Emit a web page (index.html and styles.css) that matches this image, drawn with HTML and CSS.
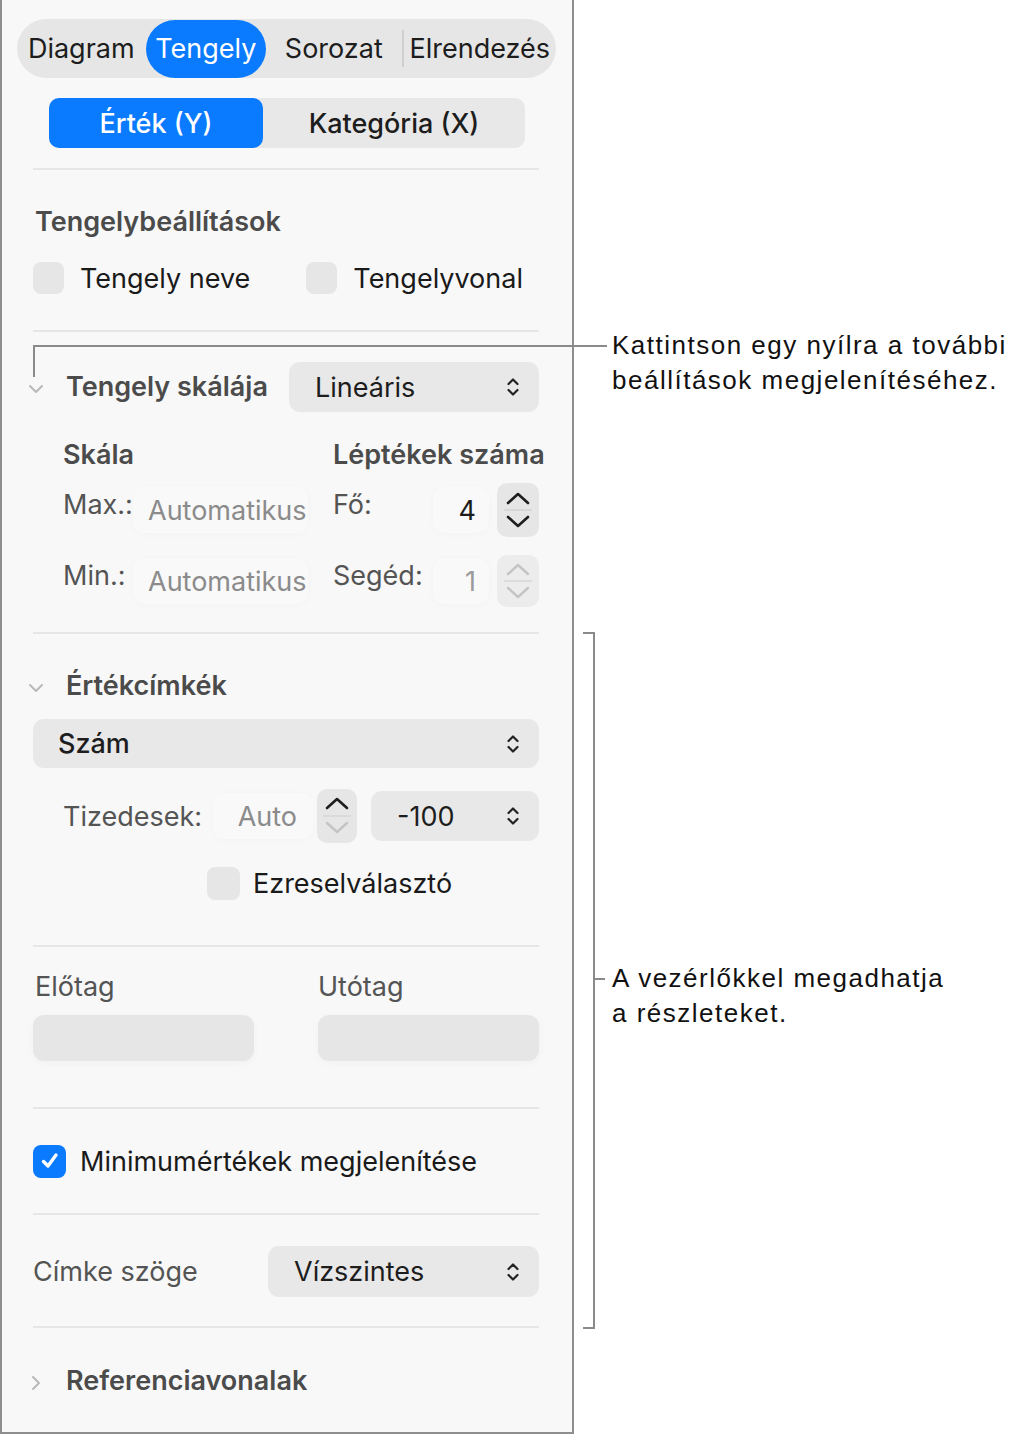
FILE: index.html
```html
<!DOCTYPE html>
<html lang="hu">
<head>
    <meta charset="UTF-8">
    <meta name="viewport" content="width=device-width, initial-scale=1.0">
    <title>Tengely beállítások</title>
    <link rel="stylesheet" href="styles.css">
</head>
<body>
    <div class="stage">
        <div class="panel">
            <!-- Top tabs -->
            <div class="tabs">
                <span class="tab t1">Diagram</span>
                <span class="tab t2 active">Tengely</span>
                <span class="tab t3">Sorozat</span>
                <span class="tab-sep"></span>
                <span class="tab t4">Elrendezés</span>
            </div>

            <div class="segmented">
                <span class="seg active">Érték (Y)</span>
                <span class="seg">Kategória (X)</span>
            </div>

            <div class="divider d1"></div>

            <div class="title t-axis">Tengelybeállítások</div>
            <div class="check-row">
                <label class="check"><span class="box"></span>Tengely neve</label>
                <label class="check second"><span class="box"></span>Tengelyvonal</label>
            </div>

            <div class="divider d2"></div>

            <div class="scale-row">
                <span class="disclose">
                    <svg width="18" height="10" viewBox="0 0 18 10"><path d="M3 2 L9 8 L15 2" fill="none" stroke="#b9b9b9" stroke-width="2" stroke-linecap="round" stroke-linejoin="round"/></svg>
                </span>
                <span class="title inline">Tengely skálája</span>
                <div class="popup scale-popup">
                    <span>Lineáris</span>
                    <svg class="updown" width="14" height="24" viewBox="0 0 14 24"><path d="M2.5 9 L7 4.5 L11.5 9 M2.5 15 L7 19.5 L11.5 15" fill="none" stroke="#222" stroke-width="2.2" stroke-linecap="round" stroke-linejoin="round"/></svg>
                </div>
            </div>

            <div class="sub-heads">
                <span class="sub">Skála</span>
                <span class="sub right">Léptékek száma</span>
            </div>

            <div class="num-row r-max">
                <span class="lbl">Max.:</span>
                <span class="field auto">Automatikus</span>
                <span class="lbl second">Fő:</span>
                <span class="field num">4</span>
                <div class="stepper">
                    <svg width="42" height="54" viewBox="0 0 42 54"><path d="M11 20 L21 11 L31 20" fill="none" stroke="#1e1e1e" stroke-width="2.6" stroke-linecap="round" stroke-linejoin="round"/><line x1="7" y1="27" x2="35" y2="27" stroke="#d2d2d2" stroke-width="1.5"/><path d="M11 34 L21 43 L31 34" fill="none" stroke="#1e1e1e" stroke-width="2.6" stroke-linecap="round" stroke-linejoin="round"/></svg>
                </div>
            </div>

            <div class="num-row r-min">
                <span class="lbl">Min.:</span>
                <span class="field auto">Automatikus</span>
                <span class="lbl second">Segéd:</span>
                <span class="field num dim">1</span>
                <div class="stepper">
                    <svg width="42" height="52" viewBox="0 0 42 52"><path d="M11 19 L21 10 L31 19" fill="none" stroke="#c4c4c4" stroke-width="2.4" stroke-linecap="round" stroke-linejoin="round"/><line x1="7" y1="26" x2="35" y2="26" stroke="#d6d6d6" stroke-width="1.5"/><path d="M11 33 L21 42 L31 33" fill="none" stroke="#c4c4c4" stroke-width="2.4" stroke-linecap="round" stroke-linejoin="round"/></svg>
                </div>
            </div>

            <div class="divider d3"></div>

            <div class="group-head">
                <span class="disclose">
                    <svg width="18" height="10" viewBox="0 0 18 10"><path d="M3 2 L9 8 L15 2" fill="none" stroke="#b9b9b9" stroke-width="2" stroke-linecap="round" stroke-linejoin="round"/></svg>
                </span>
                <span class="title inline">Értékcímkék</span>
            </div>

            <div class="popup wide">
                <span>Szám</span>
                <svg class="updown" width="14" height="24" viewBox="0 0 14 24"><path d="M2.5 9 L7 4.5 L11.5 9 M2.5 15 L7 19.5 L11.5 15" fill="none" stroke="#222" stroke-width="2.2" stroke-linecap="round" stroke-linejoin="round"/></svg>
            </div>

            <div class="dec-row">
                <span class="lbl">Tizedesek:</span>
                <span class="field dec">Auto</span>
                <div class="stepper small">
                    <svg width="40" height="54" viewBox="0 0 40 54"><path d="M10 19 L20 10 L30 19" fill="none" stroke="#1e1e1e" stroke-width="2.6" stroke-linecap="round" stroke-linejoin="round"/><line x1="6" y1="27" x2="34" y2="27" stroke="#d6d6d6" stroke-width="1.5"/><path d="M10 34 L20 43 L30 34" fill="none" stroke="#c4c4c4" stroke-width="2.4" stroke-linecap="round" stroke-linejoin="round"/></svg>
                </div>
                <div class="popup neg">
                    <span>-100</span>
                    <svg class="updown" width="14" height="24" viewBox="0 0 14 24"><path d="M2.5 9 L7 4.5 L11.5 9 M2.5 15 L7 19.5 L11.5 15" fill="none" stroke="#222" stroke-width="2.2" stroke-linecap="round" stroke-linejoin="round"/></svg>
                </div>
            </div>

            <div class="check-row thousands">
                <label class="check"><span class="box"></span>Ezreselválasztó</label>
            </div>

            <div class="divider d4"></div>

            <div class="affix-labels">
                <span class="lbl">Előtag</span>
                <span class="lbl">Utótag</span>
            </div>
            <div class="affix-fields">
                <span class="text-box"></span>
                <span class="text-box"></span>
            </div>

            <div class="divider d5"></div>

            <div class="check-row minimum">
                <label class="check"><span class="box on">
                    <svg width="24" height="24" viewBox="0 0 24 24"><path d="M5.5 12.5 L10 17 L18 6" fill="none" stroke="#fff" stroke-width="3.4" stroke-linecap="round" stroke-linejoin="round"/></svg>
                </span>Minimumértékek megjelenítése</label>
            </div>

            <div class="divider d6"></div>

            <div class="angle-row">
                <span class="lbl">Címke szöge</span>
                <div class="popup angle-popup">
                    <span>Vízszintes</span>
                    <svg class="updown" width="14" height="24" viewBox="0 0 14 24"><path d="M2.5 9 L7 4.5 L11.5 9 M2.5 15 L7 19.5 L11.5 15" fill="none" stroke="#222" stroke-width="2.2" stroke-linecap="round" stroke-linejoin="round"/></svg>
                </div>
            </div>

            <div class="divider d7"></div>

            <div class="group-head ref">
                <span class="disclose">
                    <svg width="12" height="18" viewBox="0 0 12 18"><path d="M3 3 L9 9 L3 15" fill="none" stroke="#b9b9b9" stroke-width="2" stroke-linecap="round" stroke-linejoin="round"/></svg>
                </span>
                <span class="title inline">Referenciavonalak</span>
            </div>
        </div>

        <!-- Callouts drawn over the panel -->
        <div class="leader-arrow"></div>
        <p class="note note-top">Kattintson egy nyílra a további<br>beállítások megjelenítéséhez.</p>

        <div class="bracket"></div>
        <div class="bracket-tick"></div>
        <p class="note note-mid">A vezérlőkkel megadhatja<br>a részleteket.</p>
    </div>
</body>
</html>
```

FILE: styles.css
```css
body {
    margin: 0;
    background-color: #ffffff;
    font-family: 'Inter', 'Noto Sans', sans-serif;
    color: #1d1d1d;
}
.stage {
    position: relative;
    width: 1019px;
    height: 1436px;
}
.panel {
    box-sizing: border-box;
    width: 574px;
    height: 1434px;
    border: 2px solid #8e8e8e;
    border-top: none;
    background-color: #f8f8f8;
    padding: 19px 33px 0 31px;
    display: flex;
    flex-direction: column;
    font-size: 27px;
}

/* tab bar */
.tabs {
    display: flex;
    align-items: center;
    height: 59px;
    margin: 0 -17px 0 -16px;
    border-radius: 30px;
    background-color: #e6e6e6;
    font-size: 27px;
}
.tab {
    display: flex;
    justify-content: center;
    align-items: center;
    height: 58px;
    white-space: nowrap;
}
.t1 { width: 129px; }
.t2 { width: 121px; }
.t3 { width: 136px; }
.t4 { width: 153px; }
.tab.active {
    background-color: #0a7aff;
    color: #ffffff;
    border-radius: 29px;
}
.tab-sep {
    width: 2px;
    height: 37px;
    background-color: #d0d0d0;
}
.segmented {
    display: flex;
    height: 50px;
    margin: 20px 14px 0 16px;
    border-radius: 10px;
    background-color: #e8e8e8;
    font-size: 27px;
    font-weight: 500;
}
.seg {
    flex: 1;
    display: flex;
    justify-content: center;
    align-items: center;
}
.seg.active {
    flex: 0 0 214px;
    background-color: #0a7aff;
    color: #ffffff;
    border-radius: 10px;
}
.divider {
    height: 2px;
    background-color: #e6e6e6;
    flex-shrink: 0;
}
.d1 { margin-top: 20px; }
.d2 { margin-top: 35px; }
.d3 { margin-top: 25px; }
.d4 { margin-top: 45px; }
.d5 { margin-top: 46px; }
.d6 { margin-top: 35px; }
.d7 { margin-top: 29px; }

.title {
    font-weight: 600;
    color: #4b4b4b;
    line-height: 34px;
    white-space: nowrap;
}
.t-axis {
    margin: 35px 0 0 2px;
}
.title.inline {
    margin-left: 21px;
}

/* checkboxes */
.check-row {
    display: flex;
    height: 34px;
    margin-top: 22px;
}
.check {
    display: flex;
    align-items: center;
    color: #1a1a1a;
    white-space: nowrap;
}
.check.second {
    margin-left: 56px;
}
.box {
    width: 31px;
    height: 32px;
    border-radius: 8px;
    background-color: #e6e6e6;
    margin-right: 16px;
    display: flex;
    justify-content: center;
    align-items: center;
}
.box.on {
    width: 33px;
    height: 33px;
    background-color: #0a7aff;
}
.thousands {
    margin-top: 23px;
    margin-left: 174px;
}
.thousands .box {
    width: 33px;
    height: 33px;
    margin-right: 13px;
}
.minimum {
    margin-top: 35px;
}
.minimum .box {
    margin-right: 14px;
}

/* popups */
.popup {
    display: flex;
    align-items: center;
    justify-content: space-between;
    box-sizing: border-box;
    height: 50px;
    padding: 0 19px 0 26px;
    border-radius: 11px;
    background-color: #e8e8e8;
    color: #1d1d1d;
}
.updown {
    flex-shrink: 0;
}
.scale-row {
    display: flex;
    align-items: center;
    height: 50px;
    margin-top: 30px;
}
.disclose {
    display: flex;
    justify-content: center;
    width: 18px;
    margin: 4px 0 0 -6px;
}
.scale-popup {
    width: 250px;
    margin-left: auto;
}

.sub-heads {
    display: flex;
    height: 34px;
    line-height: 34px;
    margin-top: 26px;
    font-weight: 600;
    color: #4b4b4b;
}
.sub {
    box-sizing: border-box;
    flex: 0 0 300px;
    padding-left: 30px;
    white-space: nowrap;
}
.sub.right {
    flex: 0 0 auto;
    padding-left: 0;
}

/* numeric rows */
.num-row {
    display: flex;
    align-items: center;
    height: 54px;
    margin-top: 11px;
    padding-left: 30px;
}
.r-min {
    height: 52px;
    margin-top: 18px;
}
.lbl {
    color: #545454;
    white-space: nowrap;
}
.num-row .lbl {
    width: 70px;
    margin-bottom: 12px;
}
.num-row .lbl.second {
    width: 100px;
}
.field {
    display: flex;
    align-items: center;
    box-sizing: border-box;
    height: 46px;
    border-radius: 12px;
    background-color: #f9f9f9;
    box-shadow: 0 1px 8px rgba(0, 0, 0, 0.022);
}
.field.auto {
    width: 175px;
    padding-left: 15px;
    margin-right: 25px;
    color: #8b8b8b;
}
.field.num {
    width: 56px;
    justify-content: flex-end;
    padding-right: 13px;
    margin-right: 8px;
    color: #1d1d1d;
}
.field.num.dim {
    color: #9a9a9a;
}
.stepper {
    width: 42px;
    height: 100%;
    border-radius: 10px;
    background-color: #e6e6e6;
    display: flex;
}
.r-min .stepper {
    background-color: #ececec;
}
.group-head {
    display: flex;
    align-items: center;
    height: 34px;
    margin-top: 35px;
}
.popup.wide {
    height: 49px;
    margin-top: 16px;
    padding-left: 25px;
    font-weight: 500;
}

/* decimals */
.dec-row {
    display: flex;
    align-items: center;
    height: 54px;
    margin-top: 21px;
    padding-left: 30px;
}
.dec-row .lbl {
    width: 150px;
}
.field.dec {
    width: 100px;
    justify-content: flex-end;
    padding-right: 16px;
    color: #8b8b8b;
}
.stepper.small {
    width: 40px;
    margin-left: 4px;
}
.popup.neg {
    width: 168px;
    margin-left: auto;
    height: 50px;
    padding-left: 26px;
}

/* prefix / suffix */
.affix-labels {
    display: flex;
    height: 34px;
    line-height: 34px;
    margin-top: 23px;
    padding-left: 2px;
}
.affix-labels .lbl {
    flex: 0 0 283px;
}
.affix-fields {
    display: flex;
    justify-content: space-between;
    margin-top: 11px;
}
.text-box {
    width: 221px;
    height: 46px;
    border-radius: 11px;
    background-color: #e6e6e6;
    box-shadow: 0 2px 10px rgba(0, 0, 0, 0.03);
}

.angle-row {
    display: flex;
    align-items: center;
    height: 51px;
    margin-top: 31px;
}
.angle-popup {
    width: 271px;
    height: 51px;
    margin-left: auto;
}
.ref {
    margin-top: 36px;
}

/* callouts */
.note {
    position: absolute;
    left: 612px;
    margin: 0;
    font-family: 'Liberation Sans', Arial, sans-serif;
    font-size: 26px;
    letter-spacing: 1.5px;
    line-height: 35px;
    color: #111111;
    white-space: nowrap;
}
.note-top {
    top: 328px;
}
.note-mid {
    top: 961px;
}
.leader-arrow {
    position: absolute;
    left: 33px;
    top: 345px;
    width: 572px;
    height: 30px;
    border-top: 2px solid #8a8a8a;
    border-left: 2px solid #8a8a8a;
}
.bracket {
    position: absolute;
    left: 583px;
    top: 632px;
    width: 10px;
    height: 693px;
    border: 2px solid #8a8a8a;
    border-left: none;
}
.bracket-tick {
    position: absolute;
    left: 595px;
    top: 978px;
    width: 10px;
    height: 2px;
    background-color: #8a8a8a;
}
```
